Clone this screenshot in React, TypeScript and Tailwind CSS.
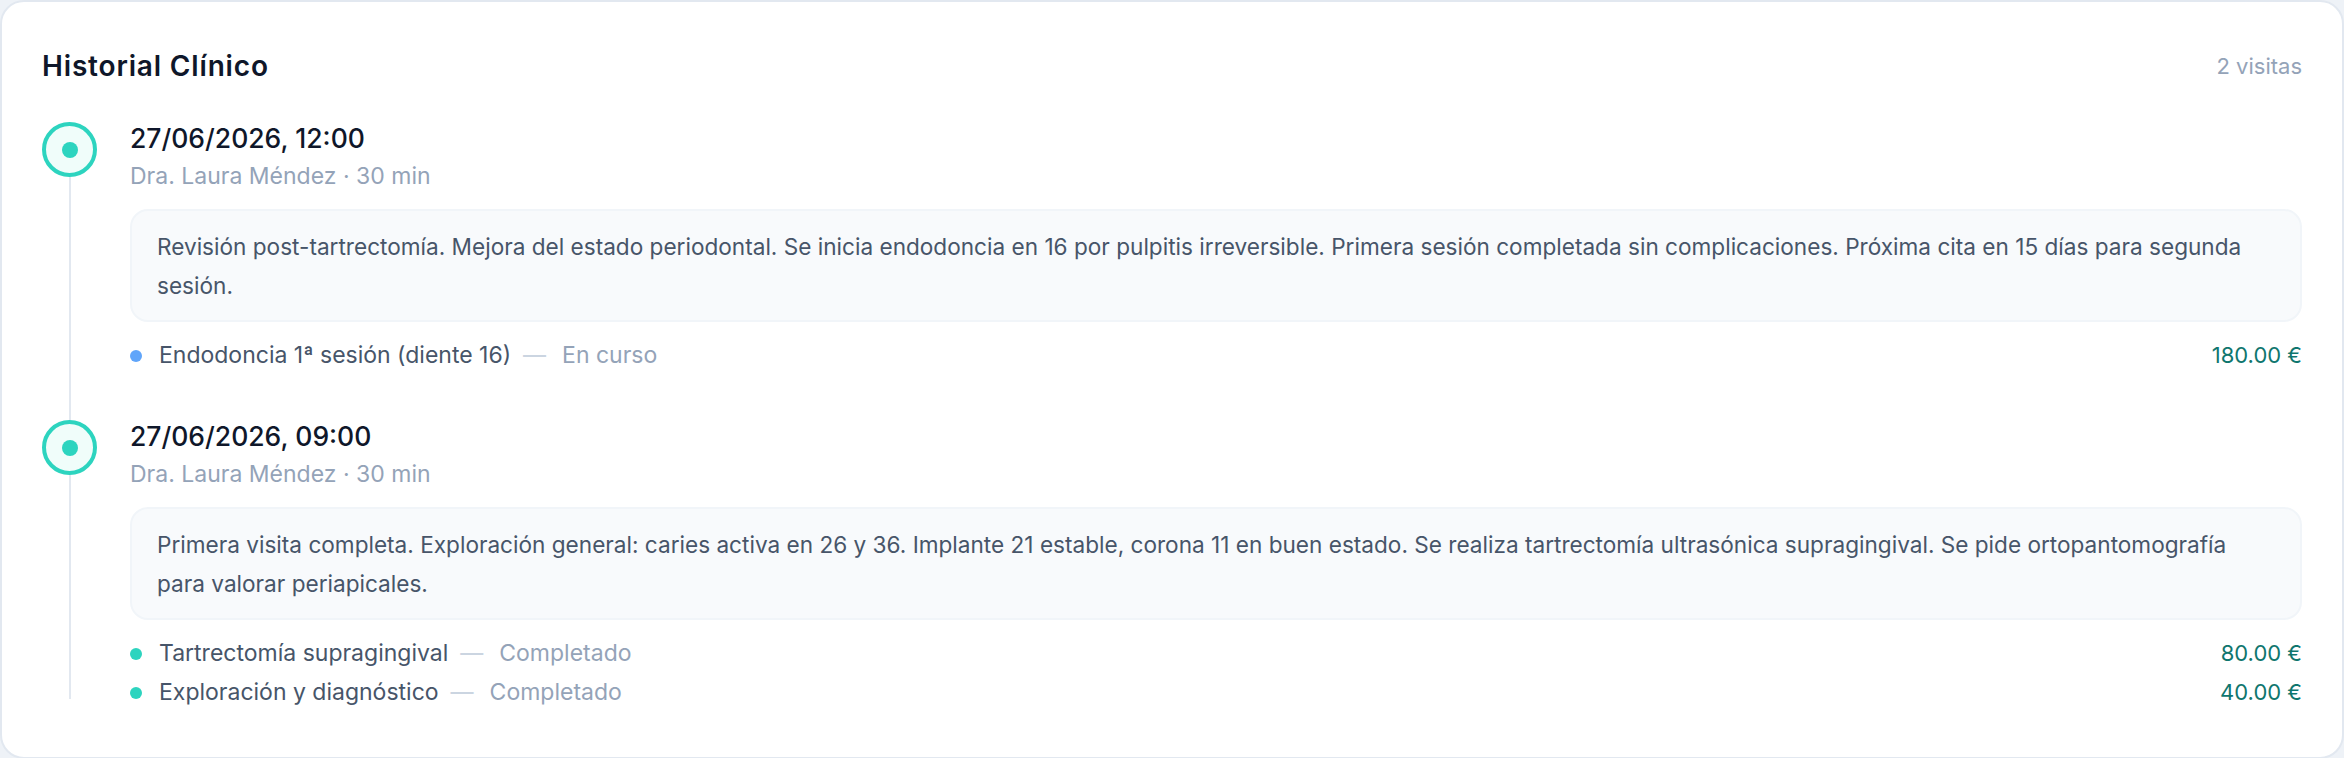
import React from "react";

type Treatment = { name: string; status: string; price: string; dot: string };
type Visit = { date: string; doctor: string; duration: string; notes: string; treatments: Treatment[] };

const visits: Visit[] = [
  {
    date: "27/06/2026, 12:00",
    doctor: "Dra. Laura Méndez",
    duration: "30 min",
    notes:
      "Revisión post-tartrectomía. Mejora del estado periodontal. Se inicia endodoncia en 16 por pulpitis irreversible. Primera sesión completada sin complicaciones. Próxima cita en 15 días para segunda sesión.",
    treatments: [{ name: "Endodoncia 1ª sesión (diente 16)", status: "En curso", price: "180.00 €", dot: "bg-[#60a5fa]" }],
  },
  {
    date: "27/06/2026, 09:00",
    doctor: "Dra. Laura Méndez",
    duration: "30 min",
    notes:
      "Primera visita completa. Exploración general: caries activa en 26 y 36. Implante 21 estable, corona 11 en buen estado. Se realiza tartrectomía ultrasónica supragingival. Se pide ortopantomografía para valorar periapicales.",
    treatments: [
      { name: "Tartrectomía supragingival", status: "Completado", price: "80.00 €", dot: "bg-[#2dd4bf]" },
      { name: "Exploración y diagnóstico", status: "Completado", price: "40.00 €", dot: "bg-[#2dd4bf]" },
    ],
  },
];

function VisitItem({ visit, last }: { visit: Visit; last: boolean }) {
  return (
    <div className="flex">
      <div className="flex w-[55px] shrink-0 flex-col items-center">
        <div className="flex h-[55px] w-[55px] items-center justify-center rounded-full border-[4.5px] border-[#2dd4bf] bg-[#f0fdfa]">
          <div className="h-[16px] w-[16px] rounded-full bg-[#2dd4bf]" />
        </div>
        <div className={`w-[2px] flex-1 bg-[#e2e8f0] ${last ? "mb-[13px]" : ""}`} />
      </div>

      <div className={`ml-[33px] min-w-0 flex-1 ${last ? "" : "pb-[45px]"}`}>
        <p className="text-[26.5px] leading-[32px] font-medium text-[#0f172a]">{visit.date}</p>
        <p className="mt-[7px] text-[23px] leading-[30px] text-[#94a3b8]">
          {visit.doctor} · {visit.duration}
        </p>

        <div className="mt-[18px] rounded-[18px] border-2 border-[#f1f5f9] bg-[#f8fafc] px-[25px] py-[15.5px] text-[22.6px] leading-[39px] text-[#475569]">
          {visit.notes}
        </div>

        <div className="mt-[14px]">
          {visit.treatments.map((t) => (
            <div key={t.name} className="flex h-[39px] items-center justify-between text-[23px]">
              <div className="flex items-center">
                <span className={`h-[12px] w-[12px] rounded-full ${t.dot}`} />
                <span className="ml-[17px] text-[#475569]">{t.name}</span>
                <span className="ml-[12px] text-[#cbd5e1]">—</span>
                <span className="ml-[16px] text-[#94a3b8]">{t.status}</span>
              </div>
              <span className="text-[22px] text-[#0f766e]">{t.price}</span>
            </div>
          ))}
        </div>
      </div>
    </div>
  );
}

export default function App() {
  return (
    <main className="min-h-[758px] bg-[#eef2f7]" style={{ fontFamily: "Inter, 'Noto Sans', sans-serif" }}>
      <div className="rounded-[24px] border-2 border-[#e2e8f0] bg-white px-[40px] pt-[40px] pb-[45px]">
        <div className="flex h-[48px] items-center justify-between">
          <h2 className="text-[28px] font-semibold tracking-[0.03em] text-[#0f172a]">Historial Clínico</h2>
          <span className="text-[22px] text-[#94a3b8]">{visits.length} visitas</span>
        </div>

        <div className="mt-[32px]">
          {visits.map((v, i) => (
            <VisitItem key={v.date} visit={v} last={i === visits.length - 1} />
          ))}
        </div>
      </div>
    </main>
  );
}
